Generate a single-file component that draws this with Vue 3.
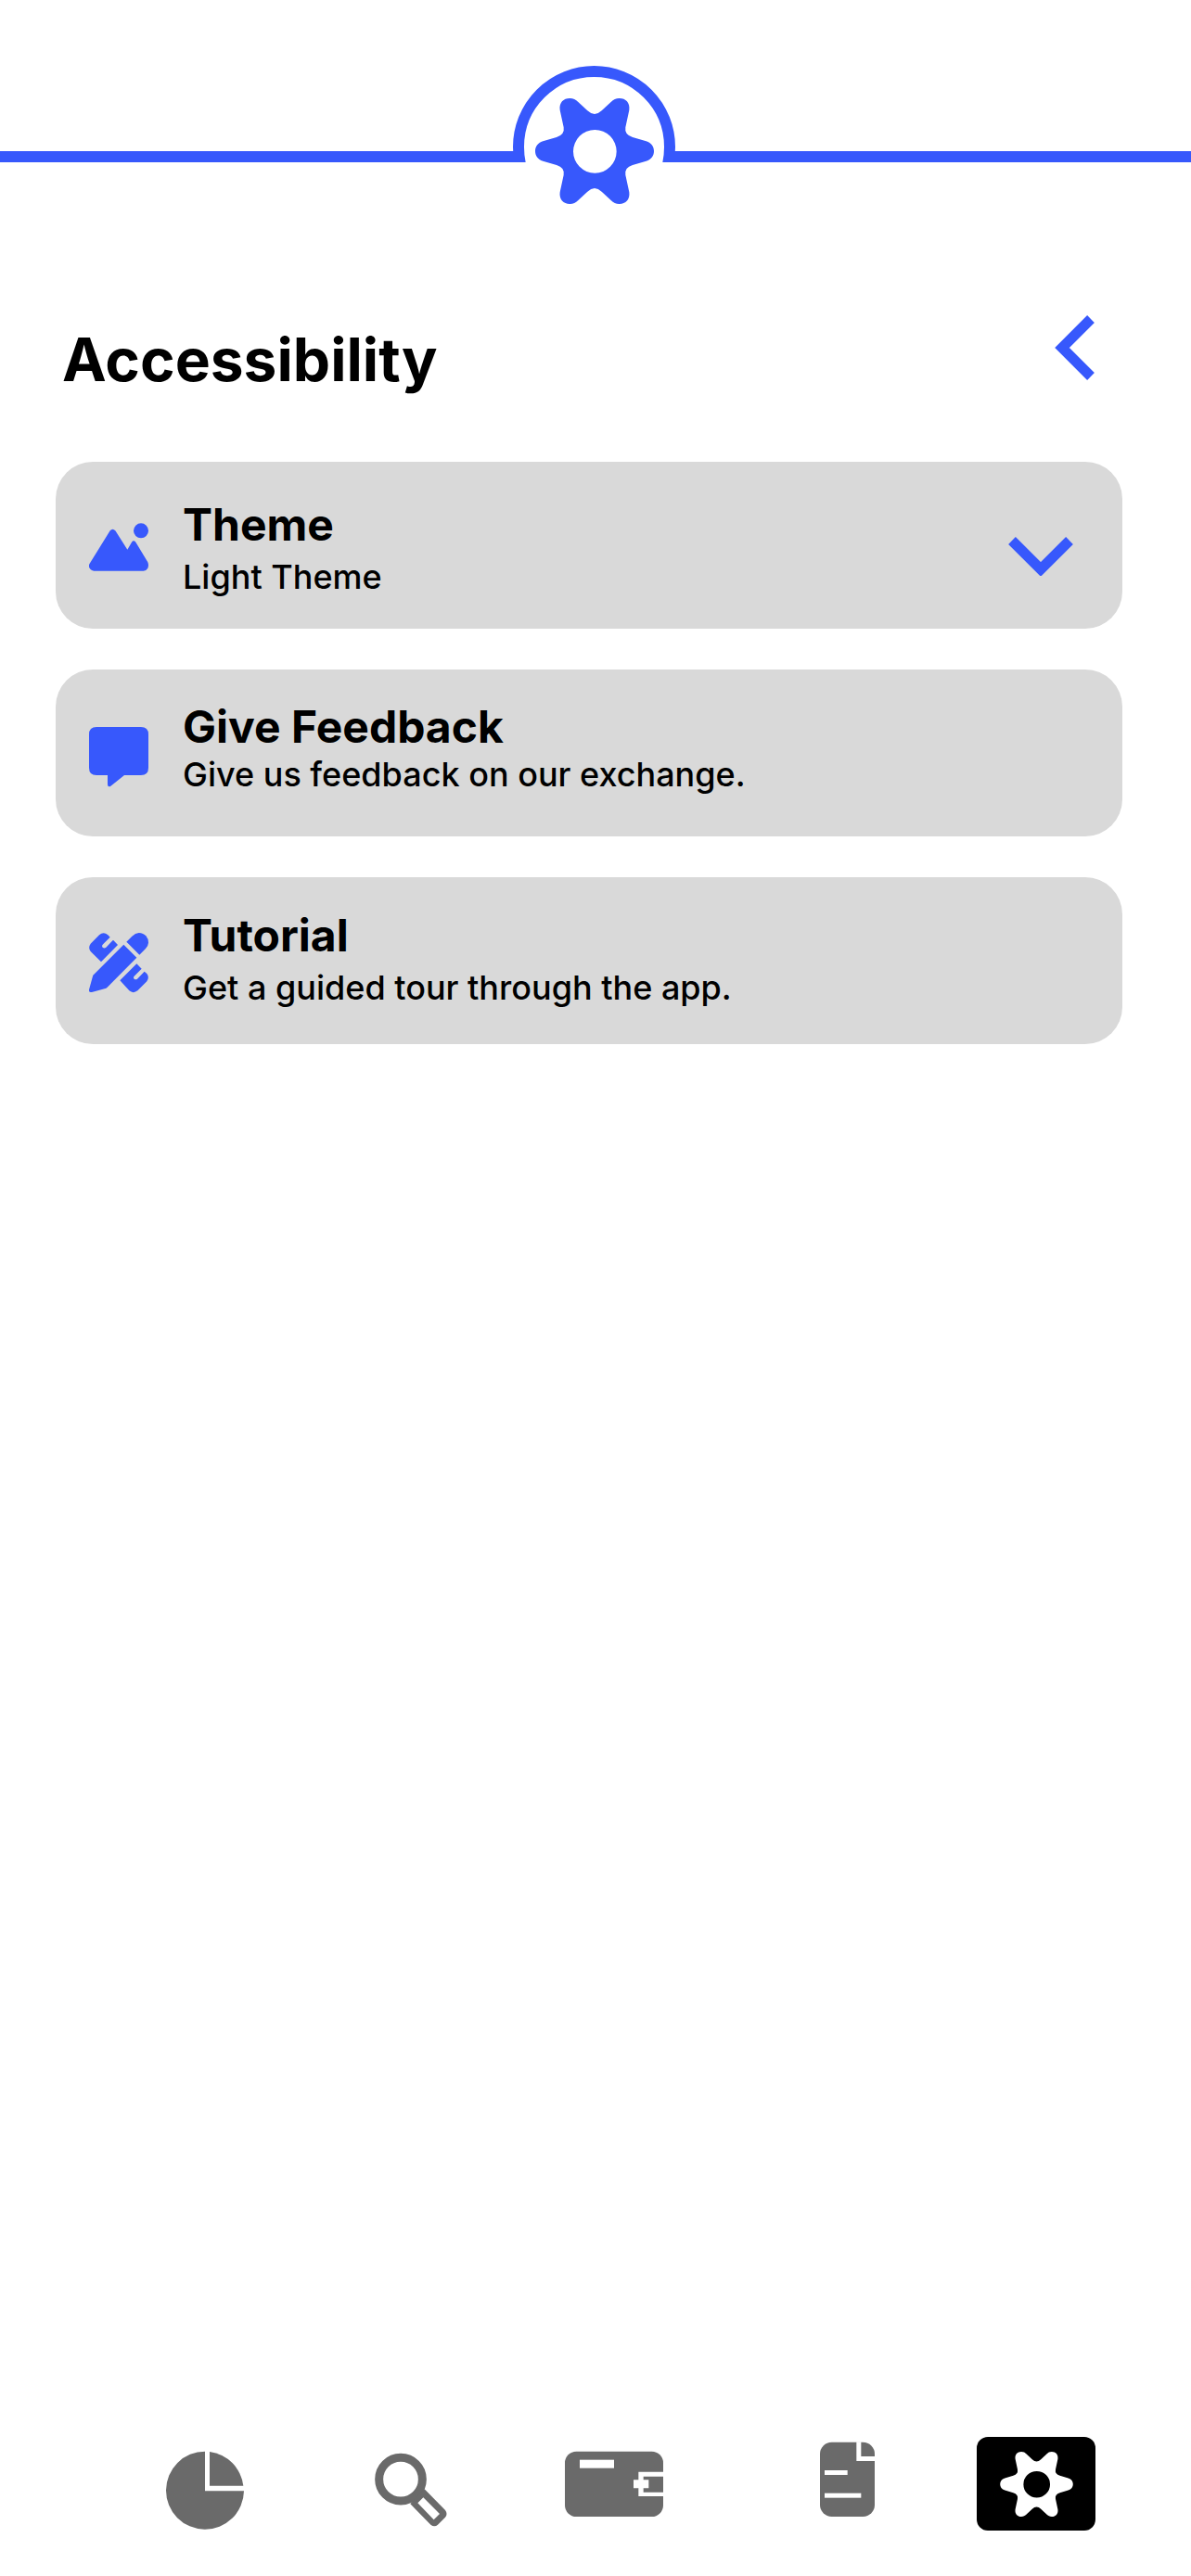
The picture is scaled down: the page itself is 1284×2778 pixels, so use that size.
<script setup>
import { ref } from 'vue'

const gearPath =
  'M196 307 L240 294 Q267 286 263 262 L251 206 C248 182 262 168 283 168 C294 168 302 172 310 180 L340 208 Q363 230 386 208 L416 180 C424 172 432 168 443 168 C464 168 478 182 475 206 L463 262 Q459 286 486 294 L530 307 C547 312 555 325 555 339 C555 353 547 366 530 371 L486 384 Q459 392 463 416 L475 472 C478 496 464 510 443 510 C432 510 424 506 416 498 L386 470 Q363 448 340 470 L310 498 C302 506 294 510 283 510 C262 510 248 496 251 472 L263 416 Q267 392 240 384 L196 371 C179 366 171 353 171 339 C171 325 179 312 196 307 Z M434 340 A70 70 0 1 0 294 340 A70 70 0 1 0 434 340 Z'

const options = [
  { id: 'theme', title: 'Theme', text: 'Light Theme' },
  { id: 'feedback', title: 'Give Feedback', text: 'Give us feedback on our exchange.' },
  { id: 'tutorial', title: 'Tutorial', text: 'Get a guided tour through the app.' },
]
</script>

<template>
  <div class="page">
    <header class="banner">
      <span class="rule"></span>
      <svg class="emblem" viewBox="0 0 175 149" aria-hidden="true">
        <svg width="175" height="104" viewBox="0 0 175 104">
          <circle cx="87.5" cy="87.5" r="81.5" class="ring" />
          <path d="M0 92 H6 V104 H0 Z M169 92 H175 V104 H169 Z" />
        </svg>
        <svg x="24" y="35" width="128" height="114" viewBox="171 168 384 342">
          <path :d="gearPath" fill="currentColor" fill-rule="evenodd" />
        </svg>
      </svg>
      <span class="rule"></span>
    </header>

    <main>
      <div class="heading">
        <h1>Accessibility</h1>
        <button class="back" type="button" aria-label="Back">
          <svg viewBox="0 0 44 70" width="44" height="70">
            <path d="M40 4 L9 35 L40 66" class="chevron" />
          </svg>
        </button>
      </div>

      <div class="cards">
        <button v-for="o in options" :key="o.id" type="button" class="card" :class="o.id">
          <svg v-if="o.id === 'theme'" class="icon" viewBox="0 0 192 204" aria-hidden="true">
            <g transform="translate(-168 -234)">
              <circle cx="336" cy="277" r="24" />
              <path d="M170 383 L236 277 Q244 267 253 277 L292 338 L306 314 Q312 306 319 314 L358 379 Q362 389 358 398 Q353 407 344 407 H184 Q173 406 169 397 Q166 390 170 383 Z" />
            </g>
          </svg>
          <svg v-else-if="o.id === 'feedback'" class="icon" viewBox="0 0 64 68" aria-hidden="true">
            <path d="M8 2 H56 Q64 2 64 10 V46 Q64 54 56 54 H38 L23 66 Q20 67 20 64 V54 H8 Q0 54 0 46 V10 Q0 2 8 2 Z" />
          </svg>
          <svg v-else class="icon" viewBox="48 77 192 204" aria-hidden="true">
            <path d="M87 171 L53 137 Q44 125 53 112 L81 84 Q95 72 109 84 L116 91 L92 115 Q88 120 93 125 Q98 128 103 124 L126 100 L141 116 Z" />
            <path d="M169 106 L187 88 Q198 77 209 77 Q224 78 232 87 Q240 96 240 109 Q239 120 231 128 L211 148 Z" />
            <path d="M160 115 L202 157 L107 253 Q104 257 98 258 L57 269 Q47 271 48 261 L60 217 Q61 213 64 211 Z" />
            <path d="M202 177 L218 193 L194 217 Q190 222 194 226 Q199 230 204 226 L227 202 L235 209 Q244 221 235 234 L205 264 Q191 275 178 264 L148 231 Z" />
          </svg>
          <span class="copy">
            <span class="title">{{ o.title }}</span>
            <span class="text">{{ o.text }}</span>
          </span>
          <svg v-if="o.id === 'theme'" class="down" viewBox="0 0 70 42" aria-hidden="true">
            <path d="M4 4 L35 35 L66 4" class="chevron" />
          </svg>
        </button>
      </div>
    </main>

    <nav class="tabs" aria-label="Main">
      <a href="#portfolio" aria-label="Portfolio">
        <svg viewBox="57 24 252 303" width="84" height="101">
          <path d="M183 71 A126 126 0 1 0 309 199 H183 Z" />
          <path d="M198 72 A126 126 0 0 1 307 182 H198 Z" />
        </svg>
      </a>
      <a href="#search" aria-label="Search">
        <svg viewBox="732 24 234 303" width="78" height="101">
          <circle cx="816" cy="161" r="70" fill="none" stroke="currentColor" stroke-width="27" />
          <path fill-rule="evenodd" d="M893 193 L960 261 Q969 273 960 284 L936 308 Q925 318 913 308 L847 241 L870 215 Z M889 220 L871 238 L923 292 L942 273 Z" />
        </svg>
      </a>
      <a href="#wallet" aria-label="Wallet">
        <svg viewBox="57 24 318 303" width="106" height="101">
          <rect x="57" y="71" width="318" height="211" rx="37" />
          <g fill="#fff">
            <rect x="105" y="98" width="111" height="27" />
            <path d="M375 137 H295 V163 H279 V190 H295 V216 H375 V203 H311 V190 H328 V163 H311 V152 H375 Z" />
          </g>
        </svg>
      </a>
      <a href="#orders" aria-label="Orders">
        <svg viewBox="882 24 177 303" width="59" height="101">
          <rect x="882" y="41" width="177" height="241" rx="38" />
          <g fill="#fff">
            <path d="M1000 40 H1015 V87 H1060 V102 H1000 Z" />
            <rect x="897" y="132" width="74" height="15" />
            <rect x="897" y="206" width="118" height="15" />
          </g>
        </svg>
      </a>
      <a href="#settings" class="current" aria-label="Settings" aria-current="page">
        <svg viewBox="171 168 384 342" width="79" height="70">
          <path :d="gearPath" fill-rule="evenodd" />
        </svg>
      </a>
    </nav>
  </div>
</template>

<style>
body {
  margin: 0;
  background: #fff;
}
</style>

<style scoped>
.page {
  display: flex;
  flex-direction: column;
  box-sizing: border-box;
  min-height: 100vh;
  padding: 71px 0 49px;
  color: #000;
  font-family: Inter, "Liberation Sans", sans-serif;
}

svg {
  display: block;
  fill: currentColor;
}

button {
  padding: 0;
  border: 0;
  background: none;
  color: #3758fc;
  font: inherit;
  text-align: left;
  cursor: pointer;
}

.banner {
  display: grid;
  grid-template-columns: 553fr 175px 556fr;
  color: #3758fc;
}

.rule {
  height: 12px;
  margin-top: 92px;
  background: currentColor;
}

.emblem {
  width: 175px;
  height: 149px;
}

.ring {
  fill: none;
  stroke: currentColor;
  stroke-width: 12;
}

.chevron {
  fill: none;
  stroke: #3758fc;
  stroke-width: 11;
}

main {
  flex: 1;
}

.heading {
  display: flex;
  justify-content: space-between;
  align-items: flex-start;
  padding: 120px 104px 0 67px;
}

h1 {
  margin: 9px 0 0;
  font-size: 64px;
  line-height: 78px;
  font-weight: 700;
}

.cards {
  display: flex;
  flex-direction: column;
  gap: 44px;
  margin: 71px 74px 0 60px;
}

.card {
  display: flex;
  align-items: flex-start;
  box-sizing: border-box;
  min-height: 180px;
  padding: 0 53px 0 36px;
  border-radius: 40px;
  background: #d9d9d9;
}

.icon {
  flex: none;
  width: 64px;
  height: 68px;
  margin-top: 60px;
}

.copy {
  display: flex;
  flex: 1;
  flex-direction: column;
  gap: 5px;
  margin-left: 37px;
  padding: 34px 0;
  color: #000;
}

.theme .copy {
  padding-top: 39px;
}

.feedback .copy {
  gap: 0;
  padding-top: 33px;
}

.title {
  font-size: 48px;
  line-height: 58px;
  font-weight: 700;
}

.text {
  font-size: 36px;
  line-height: 44px;
  font-weight: 500;
}

.down {
  width: 70px;
  height: 42px;
  margin-top: 81px;
}

.tabs {
  display: grid;
  grid-template-columns: 179fr 84px 141fr 78px 127fr 106px 169fr 59px 110fr 128px 103fr;
  color: #6a6a6a;
}

.tabs a {
  color: inherit;
}

.tabs a:nth-child(1) { grid-column: 2; }
.tabs a:nth-child(2) { grid-column: 4; }
.tabs a:nth-child(3) { grid-column: 6; }
.tabs a:nth-child(4) { grid-column: 8; }
.tabs a:nth-child(5) { grid-column: 10; }

.tabs .current {
  display: flex;
  align-items: center;
  justify-content: center;
  border-radius: 12px;
  background: #000;
  color: #fff;
}
</style>
